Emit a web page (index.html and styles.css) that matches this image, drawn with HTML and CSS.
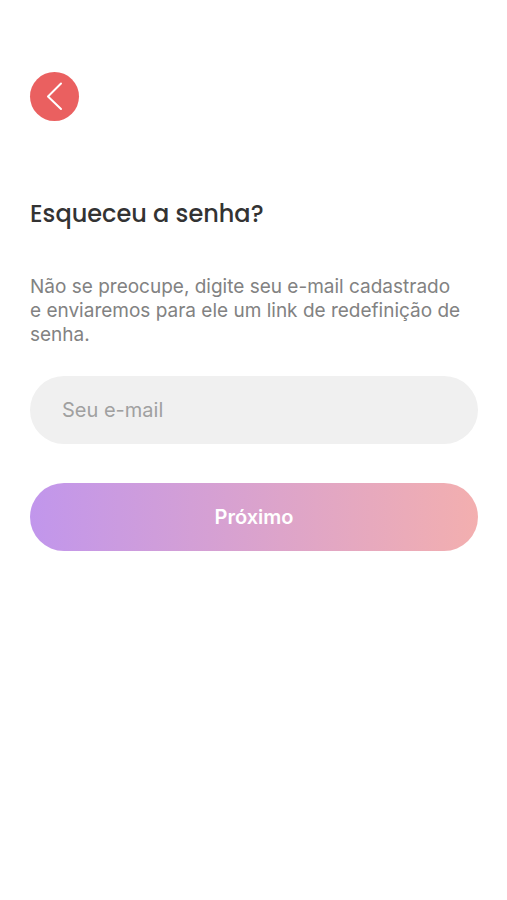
FILE: index.html
```html
<!DOCTYPE html>
<html lang="pt">
<head>
  <meta charset="UTF-8">
  <meta name="viewport" content="width=device-width, initial-scale=1.0">
  <title>Esqueceu a senha?</title>
  <link rel="stylesheet" href="styles.css">
</head>
<body>
  <header>
    <a class="voltar" href="login.html" aria-label="Voltar">
      <svg width="49" height="49" viewBox="0 0 49 49" fill="none" stroke="white" stroke-width="2" stroke-linecap="round" stroke-linejoin="round">
        <path d="M31 11.5 L18 24.5 L31 37"/>
      </svg>
    </a>
  </header>

  <main>
    <h1>Esqueceu a senha?</h1>
    <p class="descricao">Não se preocupe, digite seu e-mail cadastrado<br>e enviaremos para ele um link de redefinição de senha.</p>

    <form class="formulario">
      <input type="email" id="email" name="email" placeholder="Seu e-mail" aria-label="Seu e-mail">
      <button type="submit">Próximo</button>
    </form>
  </main>
</body>
</html>
```

FILE: styles.css
```css
* {
  box-sizing: border-box;
}

body {
  font-family: Inter, sans-serif;
  margin: 0;
  padding: 72px 29px 40px 30px;
  background-color: #fff;
  color: #333;
}

.voltar {
  display: block;
  width: 49px;
  height: 49px;
  border-radius: 50%;
  background-color: #ea6060;
}

.voltar svg {
  display: block;
}

h1 {
  font-family: Poppins, Inter, sans-serif;
  font-size: 24px;
  font-weight: 500;
  line-height: 36px;
  margin: 75px 0 43px;
}

.descricao {
  color: #828282;
  font-size: 19px;
  line-height: 24px;
  margin: 0 0 29px;
}

.formulario {
  display: flex;
  flex-direction: column;
  gap: 39px;
}

input,
button {
  width: 100%;
  height: 68px;
  border: none;
  border-radius: 34px;
  font-family: inherit;
  font-size: 20px;
}

input {
  padding: 0 32px;
  background-color: #f0f0f0;
  color: #333;
}

input::placeholder {
  color: #a0a0a0;
}

button {
  background: linear-gradient(90deg, #c196ec, #f3afaf);
  color: white;
  font-weight: 600;
  cursor: pointer;
}
```
